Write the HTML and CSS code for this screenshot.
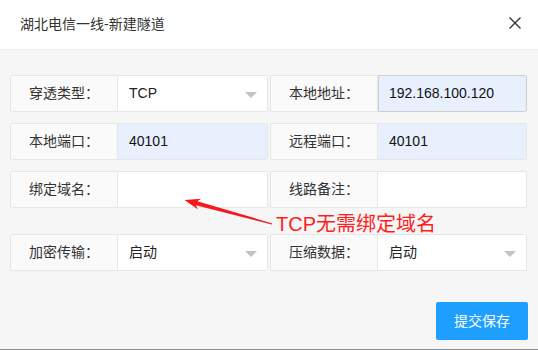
FILE: index.html
```html
<!DOCTYPE html>
<html lang="zh-CN">
<head>
<meta charset="utf-8">
<title>湖北电信一线-新建隧道</title>
<link rel="stylesheet" href="styles.css">
</head>
<body>
<div class="dialog">
  <div class="title">
    <span class="title-text">湖北电信一线-新建隧道</span>
    <svg class="close" width="12" height="12" viewBox="0 0 12 12"><path d="M0.5 0.5 L11.5 11.5 M11.5 0.5 L0.5 11.5" stroke="#333" stroke-width="1.4" fill="none"/></svg>
  </div>
  <div class="content">
    <div class="grid">
      <div class="item"><div class="label">穿透类型：</div><div class="input select">TCP</div></div>
      <div class="item"><div class="label">本地地址：</div><div class="input filled focus">192.168.100.120</div></div>
      <div class="item"><div class="label">本地端口：</div><div class="input filled">40101</div></div>
      <div class="item"><div class="label">远程端口：</div><div class="input filled">40101</div></div>
      <div class="item"><div class="label">绑定域名：</div><div class="input"></div></div>
      <div class="item"><div class="label">线路备注：</div><div class="input"></div></div>
      <div class="item row4"><div class="label">加密传输：</div><div class="input select">启动</div></div>
      <div class="item row4"><div class="label">压缩数据：</div><div class="input select">启动</div></div>
    </div>
    <div class="footer"><button class="btn">提交保存</button></div>
  </div>
  <div class="note">TCP无需绑定域名</div>
  <svg class="arrow" width="538" height="350" viewBox="0 0 538 350"><polygon points="184.5,200 201.2,198.8 197.4,201.2 272.2,223.4 271.8,224.6 195.8,205.2 198.0,209.6" fill="#f5191c"/></svg>
</div>
</body>
</html>
```
FILE: styles.css
```css
html, body {
  margin: 0;
  padding: 0;
}
body {
  width: 538px;
  height: 350px;
  overflow: hidden;
  background: #f6f6f6;
  font-family: "Liberation Sans", "Noto Sans CJK SC", sans-serif;
  font-size: 14px;
  color: #333;
}
.dialog {
  position: relative;
  height: 349px;
  border-bottom: 1px solid #8c8c8c;
  display: flex;
  flex-direction: column;
}
.title {
  height: 49px;
  line-height: 49px;
  background: #fff;
  border-bottom: 1px solid #eee;
  padding: 0 17px 0 20px;
  display: flex;
  align-items: center;
  justify-content: space-between;
}
.title-text {
  color: #333;
}
.close {
  display: block;
  margin-top: -3px;
}
.content {
  padding: 25px 11px 0 10px;
}
.grid {
  display: grid;
  grid-template-columns: 258px 257px;
  column-gap: 2px;
  row-gap: 11px;
}
.item {
  display: flex;
  height: 37px;
}
.item.row4 {
  margin-top: 15px;
  height: 37px;
}
.label {
  width: 106px;
  flex: none;
  background: #fafafa;
  border: 1px solid #e6e6e6;
  border-radius: 2px 0 0 2px;
  text-align: center;
  line-height: 35px;
  color: #333;
}
.input {
  position: relative;
  flex: 1;
  background: #fff;
  border: 1px solid #e6e6e6;
  border-left: none;
  border-radius: 0 2px 2px 0;
  padding-left: 11px;
  line-height: 35px;
  color: #222;
}
.input.filled {
  background: #e8f0fe;
  color: #111;
}
.input.focus {
  border-color: #cfcfcf;
  border-left: 1px solid #cfcfcf;
  padding-left: 10px;
}
.select::after {
  content: "";
  position: absolute;
  right: 10px;
  top: 16px;
  border-style: solid;
  border-width: 6px 6px 0 6px;
  border-color: #c2c2c2 transparent transparent transparent;
}
.footer {
  display: flex;
  justify-content: flex-end;
  margin-top: 31px;
  margin-right: -1px;
}
.btn {
  height: 38px;
  padding: 0 18px;
  border: none;
  border-radius: 2px;
  background: #1e9fff;
  color: #fff;
  font-family: "Liberation Sans", "Noto Sans CJK SC", sans-serif;
  font-size: 14px;
  line-height: 38px;
}
.note {
  position: absolute;
  left: 276px;
  top: 210px;
  font-size: 20px;
  line-height: 28px;
  color: #ff1e1e;
}
.arrow {
  position: absolute;
  left: 0;
  top: 0;
  pointer-events: none;
}
```
